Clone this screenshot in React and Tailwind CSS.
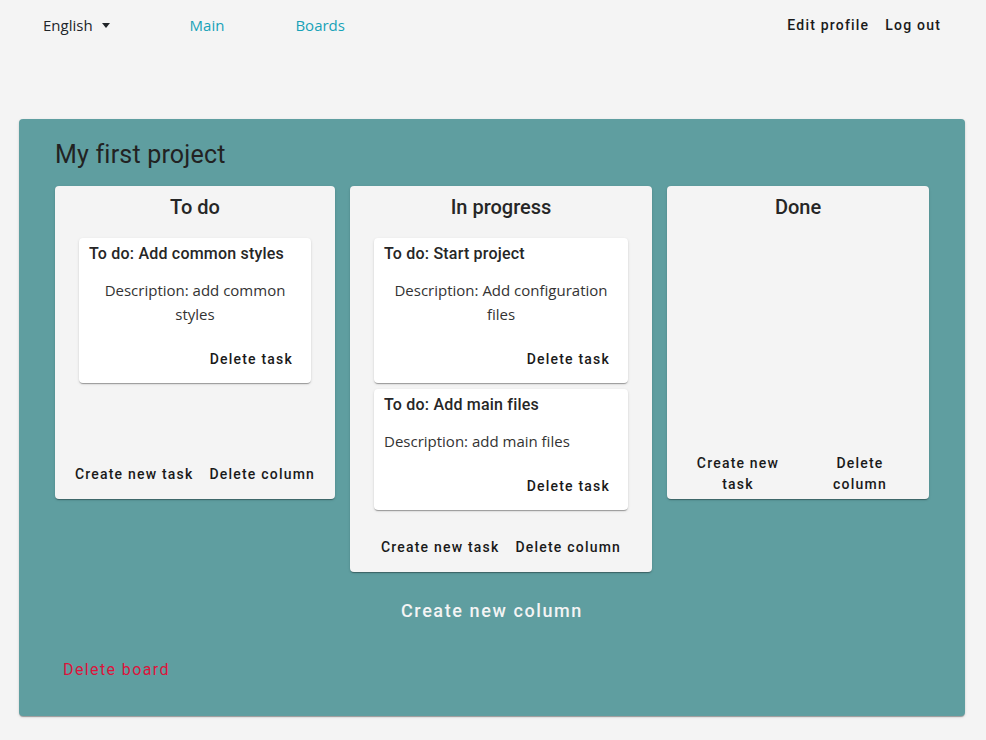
import React from "react";

const roboto = "font-['Roboto','Liberation_Sans',sans-serif]";
const segoe = "font-['Open_Sans','Noto_Sans',sans-serif]";

const columns = [
  {
    title: "To do",
    width: "w-[280px]",
    tasks: [
      { title: "To do: Add common styles", description: "Description: add common styles", centered: true },
    ],
  },
  {
    title: "In progress",
    width: "w-[302px]",
    tasks: [
      { title: "To do: Start project", description: "Description: Add configuration files", centered: true },
      { title: "To do: Add main files", description: "Description: add main files", centered: false },
    ],
  },
  { title: "Done", width: "w-[262px]", tasks: [], narrow: true },
];

const TextButton = ({ children, className = "" }) => (
  <button
    type="button"
    className={`${roboto} px-2 py-1.5 text-sm font-medium tracking-[1.2px] text-[#1a1a1a] rounded ${className}`}
  >
    {children}
  </button>
);

const TaskCard = ({ task }) => (
  <div className="bg-white rounded shadow-[0_2px_1px_-1px_rgba(0,0,0,0.2),0_1px_1px_0_rgba(0,0,0,0.14),0_1px_3px_0_rgba(0,0,0,0.12)] px-[10px] pt-1 pb-[6px]">
    <h3 className={`${roboto} text-base leading-6 font-medium tracking-[0.2px] text-[#262626]`}>{task.title}</h3>
    <p
      className={`${segoe} mt-3 text-[15px] leading-6 text-[#333] ${task.centered ? "text-center" : "text-left"}`}
    >
      {task.description}
    </p>
    <div className="flex justify-end mt-[15px]">
      <TextButton className="leading-6">Delete task</TextButton>
    </div>
  </div>
);

const Column = ({ column }) => (
  <div
    className={`${column.width} min-h-[313px] shrink-0 flex flex-col bg-[#f4f4f4] rounded shadow-[0_2px_1px_-1px_rgba(0,0,0,0.2),0_1px_1px_0_rgba(0,0,0,0.14),0_1px_3px_0_rgba(0,0,0,0.12)]`}
  >
    <h2 className={`${roboto} pt-[5px] text-center text-xl leading-8 font-medium text-[#262626]`}>
      {column.title}
    </h2>
    <div className="px-6 mt-[15px] flex flex-col gap-[6px]">
      {column.tasks.map((task) => (
        <TaskCard key={task.title} task={task} />
      ))}
    </div>
    <div className="mt-auto pt-3">
      <div className="h-[50px] flex items-center justify-center">
        {column.narrow ? (
          <>
            <TextButton className="w-[124px] shrink-0 leading-[21px]">Create new task</TextButton>
            <TextButton className="w-[120px] shrink-0 leading-[21px]">Delete column</TextButton>
          </>
        ) : (
          <>
            <TextButton className="leading-6">Create new task</TextButton>
            <TextButton className="leading-6">Delete column</TextButton>
          </>
        )}
      </div>
    </div>
  </div>
);

export default function App() {
  return (
    <div className="min-h-[740px] bg-[#f4f4f4]">
      <nav className="h-[50px] flex items-center pl-[43px] pr-[37px]">
        <button type="button" className={`${segoe} flex items-center text-[15px] text-[#212529]`}>
          English
          <span className="ml-[9px] w-0 h-0 border-l-[4px] border-r-[4px] border-t-[5px] border-l-transparent border-r-transparent border-t-[#212529]" />
        </button>
        <a href="#" className={`${segoe} ml-[80px] text-[15px] text-[#17a2b8]`}>Main</a>
        <a href="#" className={`${segoe} ml-[71px] text-[15px] text-[#17a2b8]`}>Boards</a>
        <div className="ml-auto flex items-center">
          <TextButton className="leading-6">Edit profile</TextButton>
          <TextButton className="leading-6">Log out</TextButton>
        </div>
      </nav>

      <main className="mt-[69px] mx-[19px] w-[946px] bg-[#5f9ea0] rounded shadow-[0_2px_1px_-1px_rgba(0,0,0,0.2),0_1px_1px_0_rgba(0,0,0,0.14),0_1px_3px_0_rgba(0,0,0,0.12)] pt-5 px-9 pb-[27px]">
        <h1 className={`${roboto} text-[25px] leading-8 tracking-[0.2px] text-[#222]`}>My first project</h1>
        <div className="mt-[15px] flex items-start gap-[15px]">
          {columns.map((column) => (
            <Column key={column.title} column={column} />
          ))}
        </div>
        <div className="mt-4 flex justify-center">
          <button
            type="button"
            className={`${roboto} px-3 py-2 text-lg leading-[30px] font-medium tracking-[1.6px] text-[#f4f4f4]`}
          >
            Create new column
          </button>
        </div>
        <div className="mt-[17px]">
          <button
            type="button"
            className={`${roboto} px-2 py-[7px] text-base leading-6 tracking-[1.4px] text-[#dc143c]`}
          >
            Delete board
          </button>
        </div>
      </main>
      <div className="h-6" />
    </div>
  );
}
